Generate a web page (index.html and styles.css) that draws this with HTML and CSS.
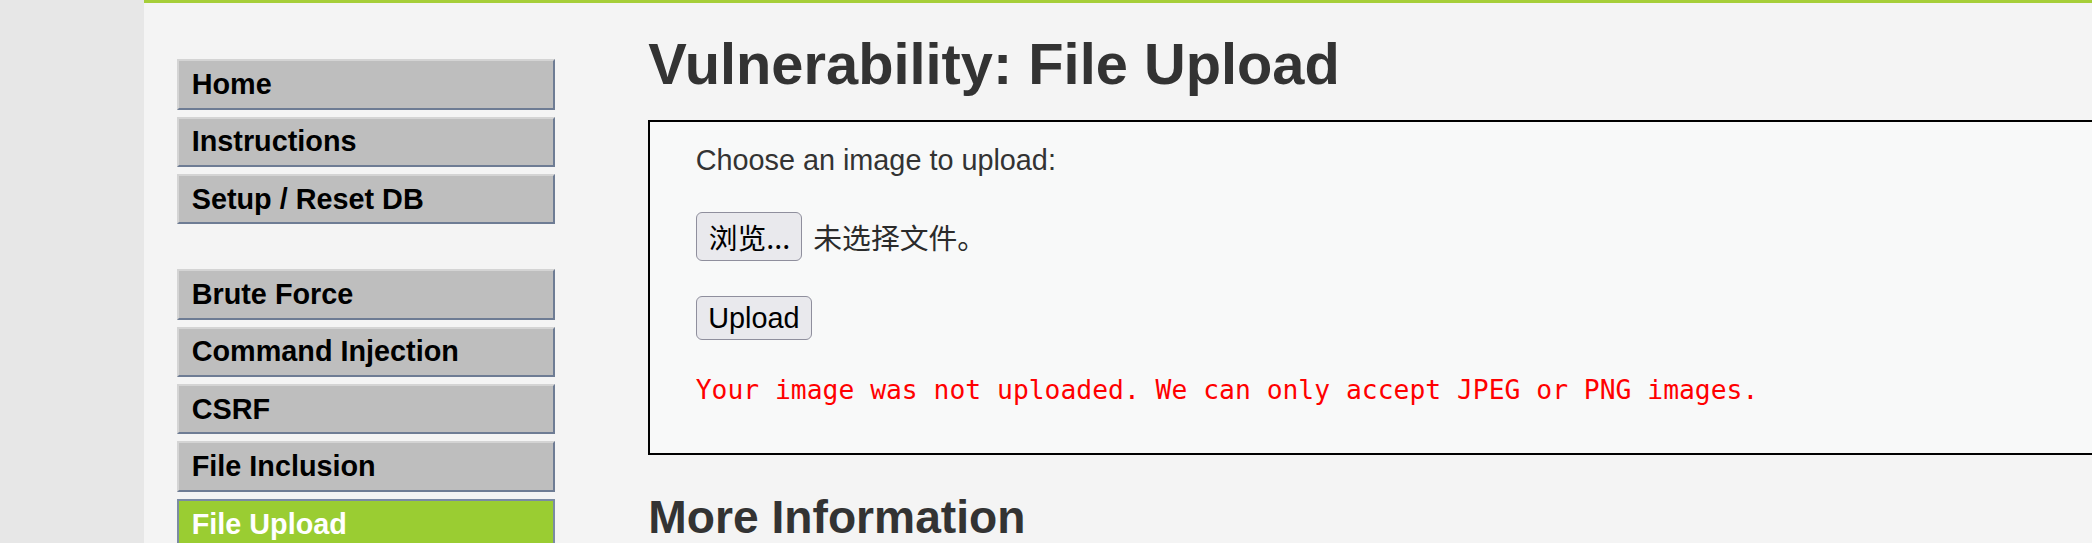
FILE: index.html
```html
<!DOCTYPE html>
<html lang="en">
<head>
<meta charset="utf-8">
<title>Vulnerability: File Upload</title>
<link rel="stylesheet" href="styles.css">
</head>
<body>
<div class="container">
  <div class="layout">
    <nav class="menu">
      <ul class="menu-group">
        <li><a class="menu-item" href="#">Home</a></li>
        <li><a class="menu-item" href="#">Instructions</a></li>
        <li><a class="menu-item" href="#">Setup / Reset DB</a></li>
      </ul>
      <ul class="menu-group">
        <li><a class="menu-item" href="#">Brute Force</a></li>
        <li><a class="menu-item" href="#">Command Injection</a></li>
        <li><a class="menu-item" href="#">CSRF</a></li>
        <li><a class="menu-item" href="#">File Inclusion</a></li>
        <li><a class="menu-item selected" href="#">File Upload</a></li>
      </ul>
    </nav>
    <main class="content">
      <h1 class="title">Vulnerability: File Upload</h1>
      <div class="code-area">
        <form class="upload-form">
          <p class="prompt">Choose an image to upload:</p>
          <div class="file-row">
            <span class="file-btn">浏览...</span><span class="file-name">未选择文件。</span>
          </div>
          <div class="submit-row"><button class="submit-btn" type="button">Upload</button></div>
        </form>
        <pre class="error">Your image was not uploaded. We can only accept JPEG or PNG images.</pre>
      </div>
      <h2 class="subtitle">More Information</h2>
    </main>
  </div>
</div>
</body>
</html>
```
FILE: styles.css
```css
html, body {
  margin: 0;
  padding: 0;
  overflow: hidden;
}

body {
  background: #e7e7e7;
  font-family: "Liberation Sans", Arial, sans-serif;
  color: #333333;
}

.container {
  margin-left: 144px;
  background: #f4f4f4;
  border-top: 3px solid #a6ce39;
  min-height: 560px;
}

.layout {
  display: flex;
  align-items: flex-start;
}

/* ---------- menu ---------- */
.menu {
  flex: none;
  width: 377.4px;
  padding: 56.3px 0 0 33.3px;
}

.menu-group {
  list-style: none;
  margin: 0 0 44.8px 0;
  padding: 0;
  display: flex;
  flex-direction: column;
  gap: 7px;
}

.menu-item {
  display: flex;
  align-items: center;
  box-sizing: border-box;
  height: 50.4px;
  padding-left: 12.4px;
  border: 2px solid;
  border-color: #d4d4d4 #6e7c94 #6e7c94 #d4d4d4;
  background: #bebebe;
  color: #000000;
  font-weight: bold;
  font-size: 28.8px;
  text-decoration: none;
  white-space: nowrap;
}

.menu-item.selected {
  background: #9acd32;
  color: #ffffff;
  border-color: #7b8ba3;
}

/* ---------- content ---------- */
.content {
  flex: none;
  width: 1600px;
  margin-left: 93.6px;
  padding-top: 28.3px;
}

.title {
  margin: 0 0 23px 0;
  font-size: 57.8px;
  line-height: 66px;
  font-weight: bold;
  color: #333333;
  white-space: nowrap;
}

.code-area {
  border: 2px solid #000000;
  background: #f8f9f9;
  padding: 21.5px 0 48.6px 45.4px;
}

.upload-form {
  display: flex;
  flex-direction: column;
  align-items: flex-start;
  gap: 35px;
  margin: 0;
}

.prompt {
  margin: 0;
  font-size: 28.8px;
  line-height: 33px;
  color: #333333;
}

.file-row {
  display: flex;
  align-items: center;
  height: 49.5px;
}

.file-btn {
  display: inline-flex;
  align-items: center;
  box-sizing: border-box;
  height: 49.5px;
  padding: 0 11px 0 12px;
  border: 1.8px solid #8f8f9d;
  border-radius: 6px;
  background: #e9e9ed;
  color: #000000;
  font-family: "Noto Sans CJK SC", "Liberation Sans", sans-serif;
  font-size: 28.8px;
}

.file-name {
  margin-left: 11px;
  color: #2b2b2b;
  font-family: "Noto Sans CJK SC", "Liberation Sans", sans-serif;
  font-size: 28.8px;
}

.submit-btn {
  box-sizing: border-box;
  height: 44px;
  padding: 0 11.6px;
  border: 1.8px solid #8f8f9d;
  border-radius: 6px;
  background: #e9e9ed;
  color: #000000;
  font-family: "Liberation Sans", Arial, sans-serif;
  font-size: 28.8px;
  line-height: 1;
}

.error {
  margin: 34.4px 0 0 0;
  color: #ff0000;
  font-family: "DejaVu Sans Mono", "Liberation Mono", monospace;
  font-size: 26.35px;
  line-height: 30px;
}

.subtitle {
  margin: 35.6px 0 0 0;
  font-size: 46.2px;
  line-height: 52px;
  font-weight: bold;
  color: #333333;
}
```
